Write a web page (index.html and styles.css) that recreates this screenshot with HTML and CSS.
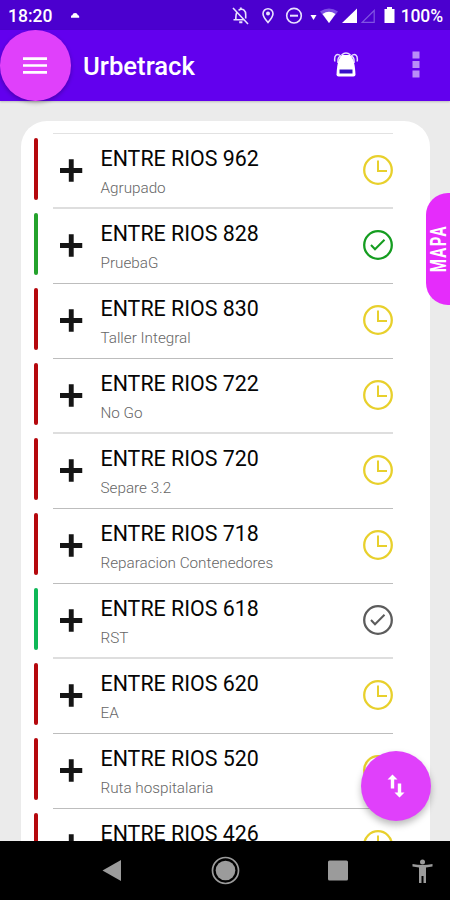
FILE: index.html
```html
<!DOCTYPE html>
<html lang="es">
<head>
<meta charset="utf-8">
<title>Urbetrack</title>
<link rel="stylesheet" href="styles.css">
</head>
<body>
<svg class="defs" width="0" height="0">
  <symbol id="plus" viewBox="0 0 23 23"><path d="M9 0h5v9h9v5h-9v9H9v-9H0V9h9z"/></symbol>
  <symbol id="clock" viewBox="0 0 30 30"><circle cx="15" cy="15" r="13.800" fill="none" stroke="currentColor" stroke-width="2.300"/><path d="M15 5.500V16h9" fill="none" stroke="currentColor" stroke-width="2"/></symbol>
  <symbol id="check" viewBox="0 0 30 30"><circle cx="15" cy="15" r="13.800" fill="none" stroke="currentColor" stroke-width="2.300"/><path d="M8 15l4 4.300 9.500-9.500" fill="none" stroke="currentColor" stroke-width="2"/></symbol>
</svg>
<div class="screen">
  <div class="status">
    <span class="time">18:20</span>
    <svg class="status-icons" width="450" height="30" viewBox="0 0 450 30" fill="none">
      <path d="M71 17.800v-1.300q0-1.200 1.300-1.200.5-2.300 2.800-2.300t2.800 2.300q1.300 0 1.300 1.200v1.300z" fill="#fff"/>
      <g stroke="#e9e2ff" stroke-width="1.600">
        <path d="M233 8l15 16M237 12c-1 1.500-1.200 3-1.200 7.800h8M238.500 10.200c5-2.500 7.200.8 7.200 4.300v4M233.500 19.800h3"/>
        <path d="M240.800 7.500v2M239.200 22.300h3.200" stroke-width="2"/>
        <path d="M268 22.500c-3-3.500-5-6-5-8.800a5 5 0 0 1 10 0c0 2.800-2 5.300-5 8.800z"/>
        <circle cx="294" cy="15.700" r="7.300"/><path d="M290 15.700h8" stroke-width="2"/>
      </g>
      <circle cx="268" cy="13.600" r="2" fill="#e9e2ff"/>
      <path d="M310.500 15h6l-3 5z" fill="#fff"/>
      <path d="M320 11.500q9-6 18 0l-9 11.500z" fill="#7c4de4"/>
      <path d="M322.500 14q6.500-4.500 13 0L329 23z" fill="#fff"/>
      <path d="M357 8.500V23h-15z" fill="#fff"/>
      <path d="M374.200 10.500v11.800h-12z" stroke="#8054e2" stroke-width="1.200"/>
      <path d="M387 7h5v2h2.500v14h-10V9h2.500z" fill="#fff"/>
    </svg>
    <span class="percent">100%</span>
  </div>
  <header class="bar">
    <button class="menu" aria-label="Menu"><svg width="24" height="18" viewBox="0 0 24 18"><path d="M0 2.700h24M0 9.500h24M0 16.300h24" stroke="#fff" stroke-width="2.700"/></svg></button>
    <h1>Urbetrack</h1>
    <svg class="bag" width="26" height="26" viewBox="0 0 26 26">
      <path d="M8.500 3q4.500-4 9 0M8 4C3.500.8 1 3.500 1.800 9.500M18 4c4.500-3.200 7-.5 6.200 5.500M8 4C6 4.500 4.500 6 5 11M18 4c2 .5 3.500 2 3 7" fill="none" stroke="#e6dcff" stroke-width="1.500"/>
      <path d="M9 3h8c3.500 3.500 4.800 8 5.500 19.500q0 2-2 2h-15q-2 0-2-2C4.200 11 5.500 6.500 9 3z" fill="#fff"/>
      <path d="M6.500 17.500h13v4h-13z" fill="#3710c8"/>
    </svg>
    <svg class="more" width="8" height="28" viewBox="0 0 8 28"><path d="M.5.500h7v7h-7zM.5 10h7v7h-7zM.5 19.500h7v7h-7z" fill="#b98cf8"/></svg>
  </header>
  <main>
    <ul class="card">
      <li class="row red"><i></i><div class="cell"><svg class="plus"><use href="#plus"/></svg><div class="text"><b>ENTRE RIOS 962</b><small>Agrupado</small></div><svg class="state wait"><use href="#clock"/></svg></div></li>
      <li class="row green soft"><i></i><div class="cell"><svg class="plus"><use href="#plus"/></svg><div class="text"><b>ENTRE RIOS 828</b><small>PruebaG</small></div><svg class="state done"><use href="#check"/></svg></div></li>
      <li class="row red"><i></i><div class="cell"><svg class="plus"><use href="#plus"/></svg><div class="text"><b>ENTRE RIOS 830</b><small>Taller Integral</small></div><svg class="state wait"><use href="#clock"/></svg></div></li>
      <li class="row red"><i></i><div class="cell"><svg class="plus"><use href="#plus"/></svg><div class="text"><b>ENTRE RIOS 722</b><small>No Go</small></div><svg class="state wait"><use href="#clock"/></svg></div></li>
      <li class="row red soft"><i></i><div class="cell"><svg class="plus"><use href="#plus"/></svg><div class="text"><b>ENTRE RIOS 720</b><small>Separe 3.2</small></div><svg class="state wait"><use href="#clock"/></svg></div></li>
      <li class="row red"><i></i><div class="cell"><svg class="plus"><use href="#plus"/></svg><div class="text"><b>ENTRE RIOS 718</b><small>Reparacion Contenedores</small></div><svg class="state wait"><use href="#clock"/></svg></div></li>
      <li class="row mint"><i></i><div class="cell"><svg class="plus"><use href="#plus"/></svg><div class="text"><b>ENTRE RIOS 618</b><small>RST</small></div><svg class="state off"><use href="#check"/></svg></div></li>
      <li class="row red soft"><i></i><div class="cell"><svg class="plus"><use href="#plus"/></svg><div class="text"><b>ENTRE RIOS 620</b><small>EA</small></div><svg class="state wait"><use href="#clock"/></svg></div></li>
      <li class="row red"><i></i><div class="cell"><svg class="plus"><use href="#plus"/></svg><div class="text"><b>ENTRE RIOS 520</b><small>Ruta hospitalaria</small></div><svg class="state wait"><use href="#clock"/></svg></div></li>
      <li class="row red"><i></i><div class="cell"><svg class="plus"><use href="#plus"/></svg><div class="text"><b>ENTRE RIOS 426</b></div><svg class="state wait"><use href="#clock"/></svg></div></li>
    </ul>
    <div class="mapa"><span>MAPA</span></div>
    <button class="fab" aria-label="Ordenar"><svg width="18" height="24" viewBox="0 0 18 24" fill="#fff"><path d="M5.500.500L10.500 5.500H7.200v9H3.800v-9H.5zM12.500 23.500l-5-5h3.300v-9h3.400v9h3.300z"/></svg></button>
  </main>
  <nav>
    <svg width="450" height="59" viewBox="0 0 450 59" fill="#9b9b9b">
      <path d="M102.500 29.500L121 19v21z"/>
      <circle cx="225.500" cy="29.500" r="13" fill="none" stroke="#9b9b9b" stroke-width="1.700"/><circle cx="225.500" cy="29.500" r="9.800"/>
      <rect x="328" y="19.500" width="20" height="20" rx="1.500"/>
      <circle cx="422.500" cy="21" r="2.500"/><path d="M412.500 23q10 2.200 20 0v2.500l-6.500 1v15.500h-2.500v-7h-2v7H419V26.500l-6.500-1z"/>
    </svg>
  </nav>
</div>
</body>
</html>
```
FILE: styles.css
```css
* { box-sizing: border-box; }
body { margin: 0; font-family: Roboto, "Liberation Sans", sans-serif; }
h1, ul { margin: 0; padding: 0; }
button { border: 0; padding: 0; }
.defs { position: absolute; }
.screen { width: 450px; height: 900px; display: flex; flex-direction: column; overflow: hidden; background: #ebebeb; }
.status { position: relative; flex: none; height: 30px; background: #4b00cf; color: #fff; display: flex; justify-content: space-between; align-items: center; padding: 2px 7px 0 8px; font-size: 17.5px; font-weight: 500; }
.status-icons { position: absolute; left: 0; top: 0; }
.percent { letter-spacing: -.1px; }
.bar { flex: none; height: 70.5px; display: flex; align-items: center; background: #6200ee; color: #fff; box-shadow: 0 1px 2px #0003; z-index: 1; }
.menu { width: 70.5px; height: 70.5px; border-radius: 50%; background: #e040fb; display: flex; align-items: center; justify-content: center; box-shadow: 0 2px 4px #0004; }
h1 { margin-left: 12.5px; flex: 1; font-size: 25.7px; font-weight: 500; line-height: 70px; padding-top: 1px; }
.bag { margin-right: 53px; }
.more { margin-right: 30.5px; }
main { position: relative; flex: 1; min-height: 0; padding: 20px 20px 0 21px; overflow: hidden; }
.card { list-style: none; height: 900px; background: #fff; border-radius: 26px; padding: 12px 37px 0 12.5px; }
.row { height: 75px; display: flex; gap: 15px; }
.row i { width: 4.5px; height: 62px; margin-top: 5.5px; border-radius: 2px; flex: none; }
.red i { background: #b5080d; }
.green i { background: #24a22c; }
.mint i { background: #0eb857; }
.cell { flex: 1; display: flex; align-items: flex-start; border-top: 1px solid #bdbdbd; }
.row:first-child .cell { border-color: #e2e2e2; }
.soft .cell { border-top: 2px solid #dedede; margin-top: -1px; }
.row .plus { width: 22.5px; height: 23px; margin: 25.5px 18px 0 7px; fill: #151515; }
.text { flex: 1; padding-top: 12px; display: flex; flex-direction: column; }
.text b { font-size: 21.4px; line-height: 25px; font-weight: 400; color: #050505; white-space: nowrap; }
.text small { margin-top: 8px; font-size: 15.25px; line-height: 18px; font-weight: 300; color: #666; }
.state { width: 30px; height: 30px; margin-top: 21.5px; }
.wait { color: #e8d02c; }
.done { color: #159d20; }
.off { color: #5c5c5c; }
.mapa { position: absolute; right: 0; top: 92.5px; width: 24px; height: 112px; border-radius: 22px 0 0 22px; background: #e52cfb; color: #fff; display: flex; align-items: center; padding-left: 2px; }
.mapa span { writing-mode: vertical-rl; transform: rotate(180deg) scaleY(.68); font-size: 22px; line-height: 21px; font-weight: 700; letter-spacing: 2px; }
.fab { position: absolute; left: 360.5px; top: 650px; width: 70px; height: 70px; border-radius: 50%; background: #e040fb; display: flex; align-items: center; justify-content: center; box-shadow: 0 4px 7px #0004; }
nav { flex: none; height: 59.5px; background: #000; }
nav svg { display: block; }
```
